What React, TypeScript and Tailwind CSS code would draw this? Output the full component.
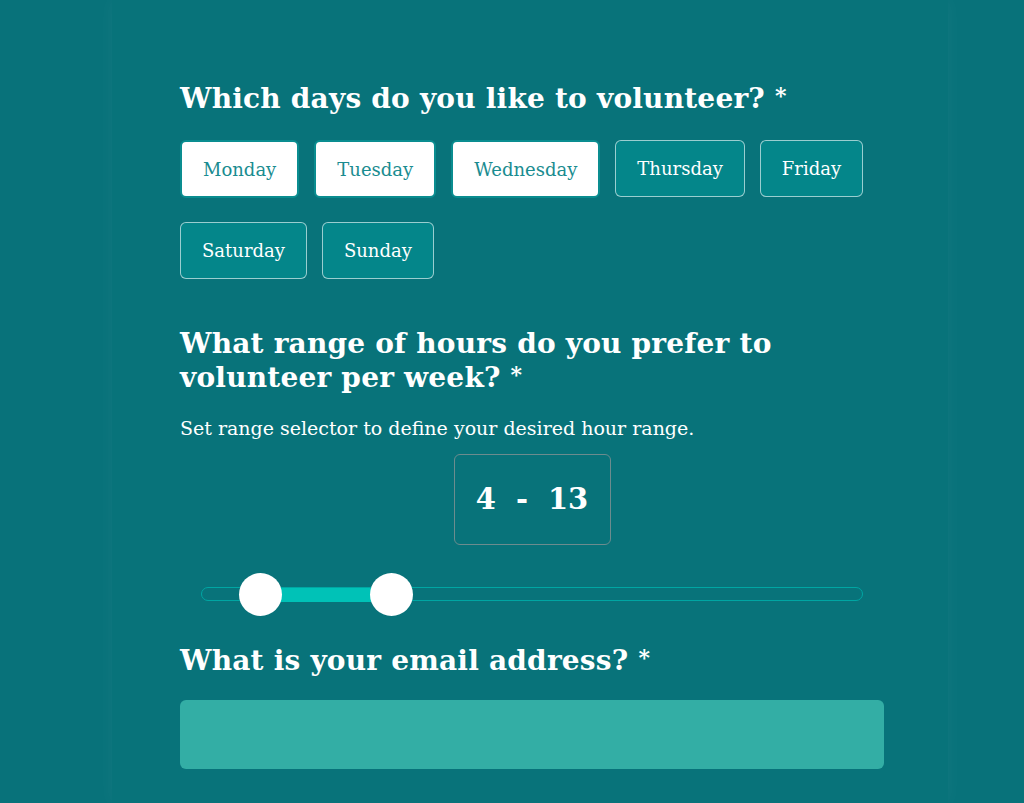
import React from "react";

const days = [
  { name: "Monday", on: true },
  { name: "Tuesday", on: true },
  { name: "Wednesday", on: true },
  { name: "Thursday", on: false },
  { name: "Friday", on: false },
  { name: "Saturday", on: false },
  { name: "Sunday", on: false },
];

function Star() {
  return (
    <span className="ml-[10px] align-top text-[22px] leading-none relative top-[2px]">*</span>
  );
}

export default function App() {
  return (
    <div
      className="h-[803px] overflow-hidden bg-[#08727a] pl-[112px]"
      style={{ fontFamily: '"DejaVu Serif", "Liberation Serif", serif' }}
    >
      <div className="w-[836px] min-h-[803px] bg-[#08737a] pl-[68px] pr-[64px] pt-[82px] shadow-[0_0_16px_rgba(255,255,255,0.05)] text-white">
        <h2 className="text-[28px] font-bold leading-[34px] tracking-[0.2px]">
          Which days do you like to volunteer?<Star />
        </h2>
        <div className="mt-[24px] flex flex-wrap gap-x-[15px] gap-y-[24px]">
          {days.map((d) =>
            d.on ? (
              <div
                key={d.name}
                className="h-[58px] px-[21px] flex items-center rounded-[6px] border-2 border-[#0a8d90] bg-white text-[#1a8c90] text-[18px]"
              >
                {d.name}
              </div>
            ) : (
              <div
                key={d.name}
                className="h-[57px] px-[21px] flex items-center rounded-[6px] border border-white/60 bg-[#04868a] text-white text-[18px]"
              >
                {d.name}
              </div>
            )
          )}
        </div>

        <h2 className="mt-[48px] text-[28px] font-bold leading-[34px] tracking-[0.2px]">
          What range of hours do you prefer to
          <br />
          volunteer per week?<Star />
        </h2>
        <p className="mt-[20px] text-[19px] leading-[26px]">
          Set range selector to define your desired hour range.
        </p>
        <div className="mt-[13px] flex justify-center">
          <div className="w-[157px] h-[91px] rounded-[6px] border border-[#6c8c8e] flex items-center justify-center text-[29px] font-bold">
            <span>4</span>
            <span className="mx-[20px]">-</span>
            <span>13</span>
          </div>
        </div>

        <div className="mt-[28px] px-[21px]">
          <div className="relative">
            <div className="absolute inset-x-0 top-[14px] h-[14px] rounded-full border border-[#00a6a3]" />
            <div className="relative flex items-center h-[43px] pl-[38px]">
              <div className="relative z-10 w-[43px] h-[43px] rounded-full bg-white shrink-0" />
              <div className="w-[130px] h-[14px] bg-[#00c2b7] shrink-0 -mx-[21px]" />
              <div className="relative z-10 w-[43px] h-[43px] rounded-full bg-white shrink-0" />
            </div>
          </div>
        </div>

        <h2 className="mt-[28px] text-[28px] font-bold leading-[34px] tracking-[0.2px]">
          What is your email address?<Star />
        </h2>
        <div className="mt-[22px] h-[69px] rounded-[6px] bg-[#33aea5]" />
      </div>
    </div>
  );
}
